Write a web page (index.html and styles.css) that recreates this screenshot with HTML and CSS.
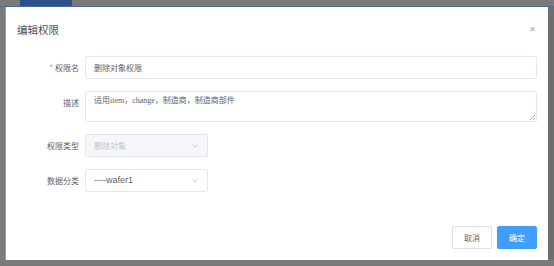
FILE: index.html
```html
<!DOCTYPE html>
<html lang="zh">
<head>
    <meta charset="UTF-8">
    <title>编辑权限</title>
    <link rel="stylesheet" href="styles.css">
</head>
<body>
    <div class="topbar">
        <div class="tab"></div>
    </div>
    <div class="page">
        <div class="dialog">
            <div class="dialog-header">
                <span class="dialog-title">编辑权限</span>
                <span class="close">&#x2715;</span>
            </div>
            <div class="dialog-body">
                <div class="form-row">
                    <label class="form-label"><span class="required">*</span> 权限名</label>
                    <div class="input">删除对象权限</div>
                </div>
                <div class="form-row">
                    <label class="form-label">描述</label>
                    <div class="textarea">适用item，change，制造商，制造商部件<span class="grip"></span></div>
                </div>
                <div class="form-row">
                    <label class="form-label">权限类型</label>
                    <div class="select disabled">删除对象<span class="arrow"></span></div>
                </div>
                <div class="form-row">
                    <label class="form-label">数据分类</label>
                    <div class="select latin">----wafer1<span class="arrow"></span></div>
                </div>
            </div>
            <div class="dialog-footer">
                <button class="btn">取消</button>
                <button class="btn primary">确定</button>
            </div>
        </div>
        <div class="right-strip"></div>
    </div>
</body>
</html>
```

FILE: styles.css
```css
body {
    margin: 0;
    width: 554px;
    height: 266px;
    overflow: hidden;
    background-color: #7a7a7a;
    font-family: "Noto Sans CJK SC", "Liberation Sans", sans-serif;
}

.topbar {
    height: 6px;
    border-bottom: 1px solid #4a6a9c;
    padding-left: 20px;
}

.tab {
    width: 52px;
    height: 6px;
    background-color: #2c4f88;
}

.page {
    display: flex;
    padding-left: 5px;
}

.dialog {
    width: 543px;
    height: 253px;
    background-color: #fff;
    display: flex;
    flex-direction: column;
    box-sizing: border-box;
    border-left: 1px solid #9a9a9a;
}

.right-strip {
    width: 6px;
    height: 253px;
    background-color: #6e6e6e;
}

.dialog-header {
    display: flex;
    justify-content: space-between;
    align-items: center;
    padding: 11px 12px 0 11px;
    height: 22px;
}

.dialog-title {
    font-size: 10.5px;
    color: #4f4f4f;
}

.close {
    font-size: 8px;
    color: #a8a8a8;
    margin-top: -2px;
}

.dialog-body {
    padding: 16px 11px 0 0;
    flex: 1;
}

.form-row {
    display: grid;
    grid-template-columns: 73px 1fr;
    column-gap: 6px;
    margin-bottom: 12px;
}

.form-row:nth-child(3),
.form-row:nth-child(4) {
    grid-template-columns: 73px 123px;
}

.form-label {
    text-align: right;
    font-size: 8px;
    color: #606266;
    line-height: 23px;
}

.required {
    color: #f56c6c;
}

.input,
.textarea,
.select {
    border: 1px solid #e4e7ed;
    border-radius: 2px;
    box-sizing: border-box;
    font-size: 8px;
    color: #606266;
    padding-left: 8px;
}

.input {
    height: 23px;
    line-height: 21px;
}

.textarea {
    position: relative;
    height: 31px;
    padding-top: 3px;
    font-family: "Liberation Serif", "Noto Sans CJK SC", serif;
    font-size: 8px;
    line-height: 11px;
}

.grip {
    position: absolute;
    right: 1px;
    bottom: 1px;
    width: 5px;
    height: 5px;
    background: linear-gradient(135deg, transparent 45%, #aaa 45%, #aaa 55%, transparent 55%, transparent 75%, #aaa 75%, #aaa 85%, transparent 85%);
}

.select {
    position: relative;
    height: 23px;
    line-height: 21px;
}

.select.latin {
    font-family: "Liberation Sans", sans-serif;
    font-size: 9px;
}

.select.disabled {
    background-color: #f5f7fa;
    color: #c0c4cc;
}

.arrow {
    position: absolute;
    right: 10px;
    top: 8px;
    width: 3px;
    height: 3px;
    border-right: 1px solid #d3d6dc;
    border-bottom: 1px solid #d3d6dc;
    transform: rotate(45deg);
}

.dialog-footer {
    display: flex;
    justify-content: flex-end;
    gap: 5px;
    padding: 0 11px 11px 0;
}

.btn {
    width: 40px;
    height: 23px;
    border: 1px solid #dcdfe6;
    border-radius: 2px;
    background-color: #fff;
    color: #606266;
    font-family: "Noto Sans CJK SC", sans-serif;
    font-size: 8px;
    padding: 0;
}

.btn.primary {
    background-color: #409eff;
    border-color: #409eff;
    color: #fff;
}
```
